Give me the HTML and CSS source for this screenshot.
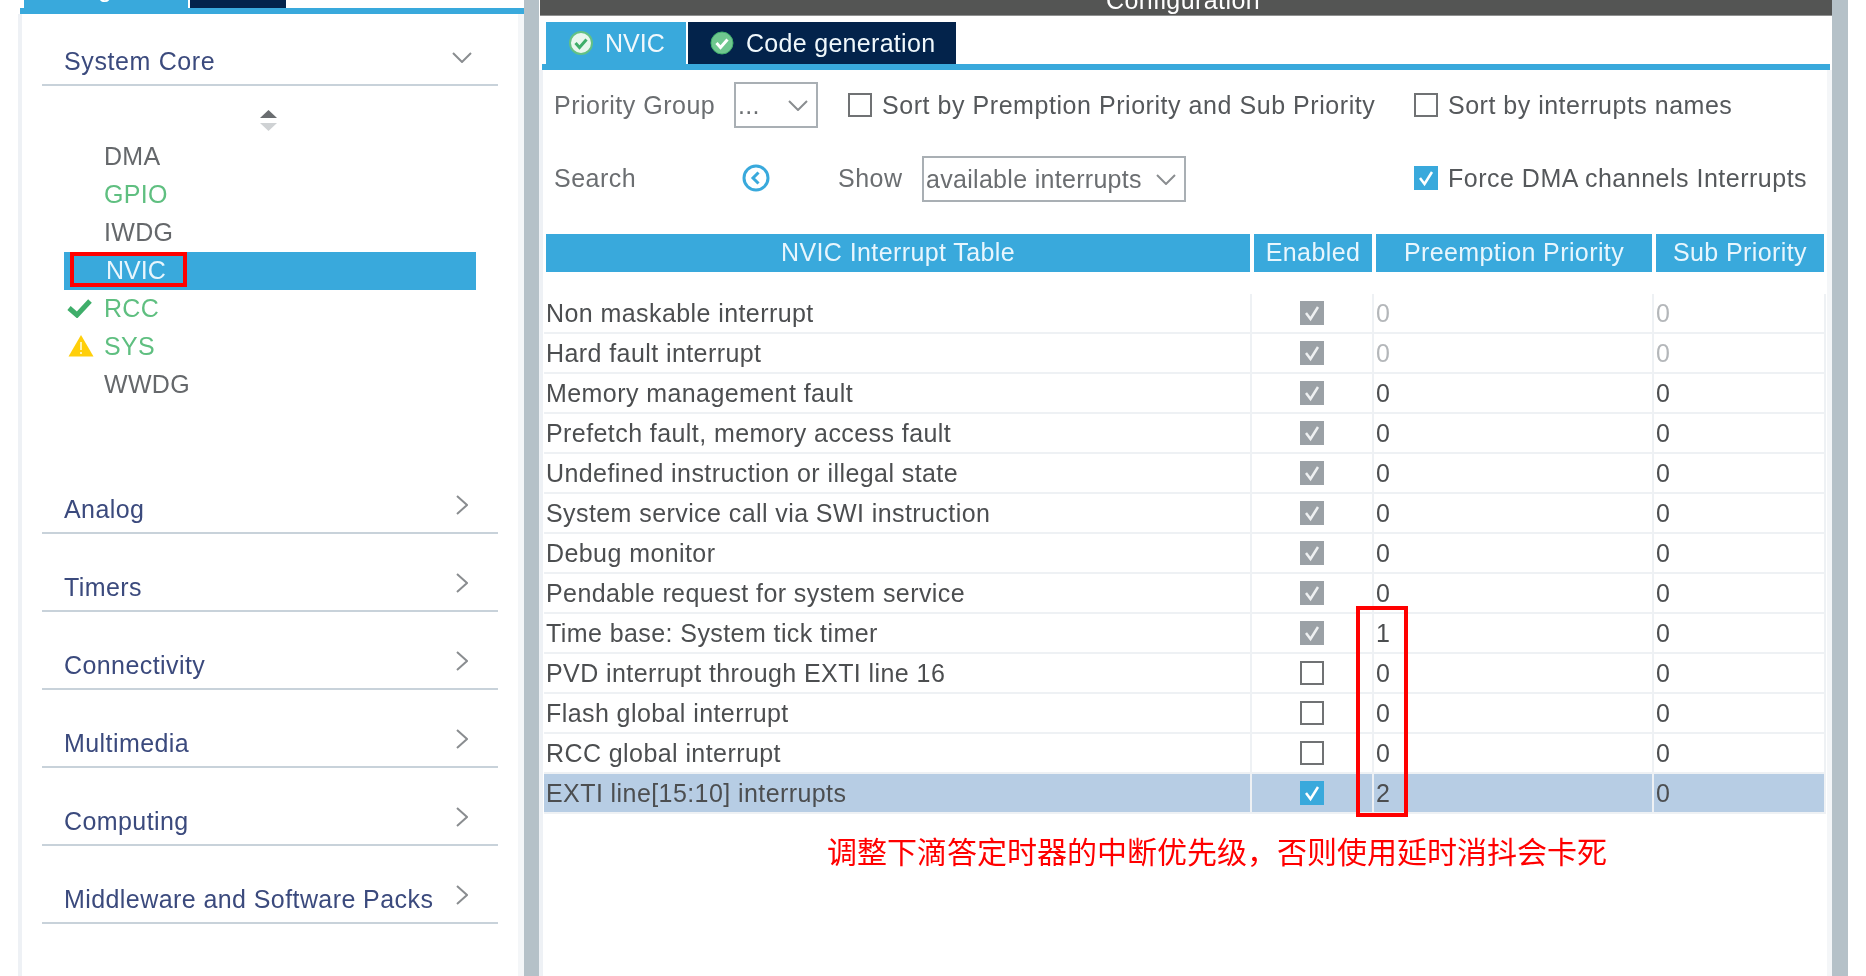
FILE: index.html
```html
<!DOCTYPE html>
<html lang="en">
<head>
<meta charset="utf-8">
<title>NVIC Configuration</title>
<link rel="stylesheet" href="styles.css">
</head>
<body>
<div class="page">
  <aside class="sidebar">
    <div class="side-tabs">
      <div class="side-tab active"><span>Categories</span></div>
      <div class="side-tab dark"><span>A-&gt;Z</span></div>
    </div>
    <div class="side-line"></div>
    <div class="side-body">
      <div class="acc first">
        <span>System Core</span>
        <svg class="chev-down" viewBox="0 0 20 11"><path d="M1 1l9 9 9-9"/></svg>
      </div>
      <div class="list">
        <svg class="sort" viewBox="0 0 17 21"><path class="up" d="M8.5 0L17 8H0z"/><path class="down" d="M0 13h17l-8.500 8z"/></svg>
        <div class="item">DMA</div>
        <div class="item green">GPIO</div>
        <div class="item">IWDG</div>
        <div class="item selected">NVIC<i class="redbox"></i></div>
        <div class="item green">
          <svg class="ico-check" viewBox="0 0 25 20"><path d="M2 10l8 7L23 3"/></svg>RCC
        </div>
        <div class="item green">
          <svg class="ico-warn" viewBox="0 0 26 23"><path class="tri" d="M13 1L25.500 22.500H.5z"/><path class="bang" d="M13 8v8M13 18v2"/></svg>SYS
        </div>
        <div class="item">WWDG</div>
      </div>
      <div class="acc"><span>Analog</span><svg class="chev" viewBox="0 0 12 20"><path d="M1 1l10 9-10 9"/></svg></div>
      <div class="acc"><span>Timers</span><svg class="chev" viewBox="0 0 12 20"><path d="M1 1l10 9-10 9"/></svg></div>
      <div class="acc"><span>Connectivity</span><svg class="chev" viewBox="0 0 12 20"><path d="M1 1l10 9-10 9"/></svg></div>
      <div class="acc"><span>Multimedia</span><svg class="chev" viewBox="0 0 12 20"><path d="M1 1l10 9-10 9"/></svg></div>
      <div class="acc"><span>Computing</span><svg class="chev" viewBox="0 0 12 20"><path d="M1 1l10 9-10 9"/></svg></div>
      <div class="acc"><span>Middleware and Software Packs</span><svg class="chev" viewBox="0 0 12 20"><path d="M1 1l10 9-10 9"/></svg></div>
    </div>
  </aside>

  <div class="divider"></div>

  <main class="config">
    <header class="config-head">Configuration</header>
    <div class="tabs">
      <div class="tab active"><svg class="ok" viewBox="0 0 24 24"><circle cx="12" cy="12" r="11"/><path d="M6.500 12l4 4.500 7-8"/></svg>NVIC</div>
      <div class="tab dark"><svg class="ok" viewBox="0 0 24 24"><circle cx="12" cy="12" r="11"/><path d="M6.500 12l4 4.500 7-8"/></svg>Code generation</div>
    </div>
    <div class="tab-line"></div>
    <div class="panel">
      <div class="tool one">
        <span class="lbl">Priority Group</span>
        <div class="select narrow"><span>...</span><svg class="sel-chev" viewBox="0 0 20 11"><path d="M1 1l9 9 9-9"/></svg></div>
        <svg class="cb empty sortcb" viewBox="0 0 24 24"></svg>
        <span class="opt wide">Sort by Premption Priority and Sub Priority</span>
        <svg class="cb empty" viewBox="0 0 24 24"></svg>
        <span class="opt">Sort by interrupts names</span>
      </div>
      <div class="tool two">
        <span class="lbl">Search</span>
        <svg class="back" viewBox="0 0 28 28"><circle cx="14" cy="14" r="12"/><path d="M16.500 8.500L11 14l5.500 5.500"/></svg>
        <span class="show">Show</span>
        <div class="select broad"><span>available interrupts</span><svg class="sel-chev" viewBox="0 0 20 11"><path d="M1 1l9 9 9-9"/></svg></div>
        <svg class="cb blue force" viewBox="0 0 24 24"><path d="M6 12l4.500 6L18 6"/></svg>
        <span class="opt">Force DMA channels Interrupts</span>
      </div>

      <div class="thead">
        <div>NVIC Interrupt Table</div><div>Enabled</div><div>Preemption Priority</div><div>Sub Priority</div>
      </div>

      <div class="rows">
        <div class="row off"><div>Non maskable interrupt</div><div class="c"><svg class="cb gray" viewBox="0 0 24 24"><path d="M6 12l4.500 6L18 6"/></svg></div><div class="v">0</div><div class="v">0</div></div>
        <div class="row off"><div>Hard fault interrupt</div><div class="c"><svg class="cb gray" viewBox="0 0 24 24"><path d="M6 12l4.500 6L18 6"/></svg></div><div class="v">0</div><div class="v">0</div></div>
        <div class="row"><div>Memory management fault</div><div class="c"><svg class="cb gray" viewBox="0 0 24 24"><path d="M6 12l4.500 6L18 6"/></svg></div><div class="v">0</div><div class="v">0</div></div>
        <div class="row"><div>Prefetch fault, memory access fault</div><div class="c"><svg class="cb gray" viewBox="0 0 24 24"><path d="M6 12l4.500 6L18 6"/></svg></div><div class="v">0</div><div class="v">0</div></div>
        <div class="row"><div>Undefined instruction or illegal state</div><div class="c"><svg class="cb gray" viewBox="0 0 24 24"><path d="M6 12l4.500 6L18 6"/></svg></div><div class="v">0</div><div class="v">0</div></div>
        <div class="row"><div>System service call via SWI instruction</div><div class="c"><svg class="cb gray" viewBox="0 0 24 24"><path d="M6 12l4.500 6L18 6"/></svg></div><div class="v">0</div><div class="v">0</div></div>
        <div class="row"><div>Debug monitor</div><div class="c"><svg class="cb gray" viewBox="0 0 24 24"><path d="M6 12l4.500 6L18 6"/></svg></div><div class="v">0</div><div class="v">0</div></div>
        <div class="row"><div>Pendable request for system service</div><div class="c"><svg class="cb gray" viewBox="0 0 24 24"><path d="M6 12l4.500 6L18 6"/></svg></div><div class="v">0</div><div class="v">0</div></div>
        <div class="row"><div>Time base: System tick timer</div><div class="c"><svg class="cb gray" viewBox="0 0 24 24"><path d="M6 12l4.500 6L18 6"/></svg></div><div class="v">1</div><div class="v">0</div></div>
        <div class="row"><div>PVD interrupt through EXTI line 16</div><div class="c"><svg class="cb empty" viewBox="0 0 24 24"></svg></div><div class="v">0</div><div class="v">0</div></div>
        <div class="row"><div>Flash global interrupt</div><div class="c"><svg class="cb empty" viewBox="0 0 24 24"></svg></div><div class="v">0</div><div class="v">0</div></div>
        <div class="row"><div>RCC global interrupt</div><div class="c"><svg class="cb empty" viewBox="0 0 24 24"></svg></div><div class="v">0</div><div class="v">0</div></div>
        <div class="row hi"><div>EXTI line[15:10] interrupts</div><div class="c"><svg class="cb blue" viewBox="0 0 24 24"><path d="M6 12l4.500 6L18 6"/></svg></div><div class="v">2</div><div class="v">0</div></div>
        <i class="redcol"></i>
      </div>

      <p class="note">调整下滴答定时器的中断优先级，否则使用延时消抖会卡死</p>
    </div>
  </main>

  <div class="divider right"></div>
</div>
</body>
</html>
```
FILE: styles.css
```css
* { box-sizing: border-box; }
html, body { margin: 0; height: 100%; background: #fff; overflow: hidden; }
.page {
  display: flex;
  height: 976px;
  padding-left: 18px;
  font: 25px/28px "Liberation Sans", Arial, sans-serif;
  letter-spacing: .42px;
  color: #4c4e50;
  filter: blur(.55px);
}

/* sidebar */
.sidebar { width: 506px; display: flex; flex-direction: column; }
.side-tabs { display: flex; height: 8px; gap: 2px; padding-left: 6px; overflow: hidden; }
.side-tab { line-height: 0; text-align: center; color: #fff; }
.side-tab span { display: block; margin-top: -12px; }
.side-tab.active { width: 164px; background: #39a9dc; }
.side-tab.dark { width: 96px; background: #03234b; }
.side-line { height: 6px; margin-left: 2px; background: #39a9dc; }
.side-body {
  flex: 1;
  padding-left: 20px;
  border-left: 4px solid #eef1f5;
  border-right: 6px solid #f4f6f8;
}
.acc {
  width: 456px;
  height: 78px;
  display: flex;
  align-items: center;
  justify-content: space-between;
  padding: 40px 30px 10px 22px;
  border-bottom: 2px solid #c8d2da;
  color: #3b4a7d;
}
.acc.first { height: 72px; padding: 34px 26px 10px 22px; letter-spacing: .62px; }
.acc svg { fill: none; stroke: #8a8d90; stroke-width: 2; }
.chev-down { width: 20px; height: 11px; margin-bottom: 7px; }
.chev { width: 12px; height: 20px; margin-bottom: 8px; }

.list { height: 370px; padding-top: 24px; }
.sort { display: block; width: 17px; height: 21px; margin: 0 0 7px 218px; }
.sort .up { fill: #6a6d70; }
.sort .down { fill: #cfd2d4; }
.item {
  position: relative;
  width: 412px;
  height: 38px;
  margin-left: 22px;
  padding: 0 0 2px 40px;
  display: flex;
  align-items: center;
  line-height: 36px;
  letter-spacing: .3px;
  color: #65686b;
}
.item.green { color: #5fbf80; }
.item.selected { background: #39a9dc; color: #e8f6fd; padding-left: 42px; letter-spacing: 0; }
.redbox {
  position: absolute;
  left: 6px;
  top: 0;
  width: 117px;
  height: 35px;
  border: 4px solid #f00;
}
.ico-check {
  position: absolute;
  left: 3px;
  top: 8px;
  width: 25px;
  height: 20px;
  fill: none;
  stroke: #3fae6a;
  stroke-width: 5;
}
.ico-warn { position: absolute; left: 4px; top: 6px; width: 26px; height: 23px; }
.ico-warn .tri { fill: #ffcf0a; }
.ico-warn .bang { stroke: #fff3b0; stroke-width: 2; fill: none; }

.divider { width: 15px; background: #b5c1c8; }
.divider.right { width: 16px; }

/* config */
.config { width: 1293px; display: flex; flex-direction: column; }
.config-head {
  height: 16px;
  margin-left: 1px;
  padding-right: 6px;
  background: #545554;
  border-bottom: 1px solid #8f9090;
  overflow: hidden;
  text-align: center;
  line-height: 0;
  color: #fff;
}
.tabs { display: flex; gap: 2px; height: 42px; margin-top: 6px; padding-left: 7px; }
.tab {
  display: flex;
  align-items: center;
  color: #f0f8fc;
  letter-spacing: .3px;
}
.tab.active { width: 140px; padding-left: 23px; background: #39a9dc; letter-spacing: 0; }
.tab.dark { width: 268px; padding-left: 22px; background: #03234b; }
.ok { width: 24px; height: 24px; margin-right: 12px; flex: none; }
.ok circle { fill: #6fc78f; stroke: #3fae6a; stroke-width: 1; }
.ok path { fill: none; stroke: #fff; stroke-width: 3; }
.tab.active .ok circle { fill: #e9f7ee; stroke: #63c184; stroke-width: 2; }
.tab.active .ok path { stroke: #3fae6a; }
.tab-line { height: 6px; width: 1288px; margin-left: 3px; background: #39a9dc; }

.panel { flex: 1; border-left: 4px solid #eef1f5; border-right: 5px solid #f4f6f8; }
.tool { display: flex; align-items: center; padding-left: 11px; color: #6b6e71; letter-spacing: .5px; }
.tool.one { height: 70px; }
.tool.two { height: 76px; }
.lbl { width: 180px; flex: none; }
.select {
  display: flex;
  align-items: center;
  justify-content: space-between;
  height: 46px;
  border: 2px solid #a9afb4;
  padding: 0 8px 0 2px;
  flex: none;
  letter-spacing: .3px;
}
.tool.two .select { margin-top: 2px; }
.select.narrow { width: 84px; }
.select.broad { width: 264px; }
.sel-chev { width: 20px; height: 11px; fill: none; stroke: #8a8d90; stroke-width: 2; }
.cb { display: block; width: 24px; height: 24px; flex: none; fill: none; stroke: #fff; stroke-width: 2.500; }
.cb.empty { background: #fff; border: 2.500px solid #707274; }
.cb.gray { background: #9ba1a6; stroke: #eef0f1; }
.cb.blue { background: #39a9dc; }
.sortcb { margin-left: 30px; }
.force { margin-left: 228px; }
.opt { margin-left: 10px; color: #55585b; }
.opt.wide { width: 522px; margin-right: 10px; flex: none; letter-spacing: .55px; }
.back { width: 28px; height: 28px; margin-left: 8px; fill: none; stroke: #39a9dc; stroke-width: 3; flex: none; }
.show { width: 84px; margin-left: 68px; flex: none; }

.thead {
  display: grid;
  grid-template-columns: 704px 118px 276px 168px;
  gap: 4px;
  height: 38px;
  margin: 18px 0 22px 3px;
}
.thead div {
  background: #39a9dc;
  color: #e8f6fd;
  text-align: center;
  line-height: 36px;
  letter-spacing: .4px;
}

.rows { position: relative; width: 1282px; margin-left: 1px; }
.row {
  display: grid;
  grid-template-columns: 708px 122px 280px 172px;
  height: 40px;
  line-height: 38px;
  color: #4c4e50;
  letter-spacing: .42px;
}
.row > div { border-right: 2px solid #eef1f4; border-bottom: 2px solid #eef1f4; padding-left: 2px; }
.row .c { display: flex; align-items: center; padding-left: 48px; }
.row .v { letter-spacing: 0; }
.row.off .v { color: #b4b7ba; }
.row.hi { background: #b7cde4; }
.redcol {
  position: absolute;
  left: 812px;
  top: 312px;
  width: 52px;
  height: 211px;
  border: 4px solid #f00;
}
.note {
  margin: 18px 0 0 284px;
  font: 30px/36px "Noto Sans CJK SC", "Liberation Sans", sans-serif;
  letter-spacing: 0;
  color: #f00;
}
```
